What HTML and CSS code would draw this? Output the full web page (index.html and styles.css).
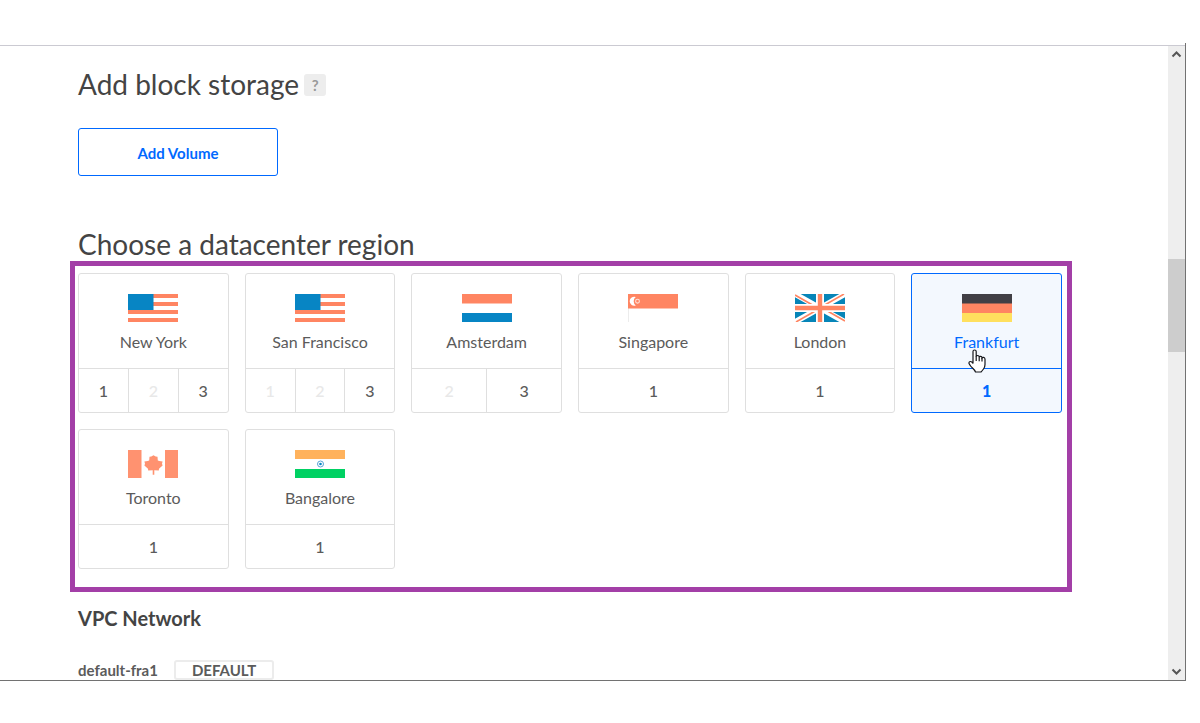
FILE: index.html
```html
<!DOCTYPE html>
<html lang="en">
<head>
<meta charset="utf-8">
<title>Create Droplet</title>
<link rel="stylesheet" href="styles.css">
</head>
<body>
<svg class="defs" aria-hidden="true">
  <symbol id="flag-us" viewBox="0 0 50 28">
    <rect width="50" height="28" fill="#fff"/>
    <path fill="#ff8562" d="M0 0h50v4H0zM0 8h50v4H0zM0 16h50v4H0zM0 24h50v4H0z"/>
    <rect width="25.500" height="16" fill="#0785c4"/>
  </symbol>
</svg>
<div class="frame">
  <div class="view">
    <main class="content">
      <h2 class="title">Add block storage <button class="help" type="button" aria-label="Help">?</button></h2>
      <button class="add-volume" type="button">Add Volume</button>
      <h2 class="title title-region">Choose a datacenter region</h2>
      <section class="highlight" aria-label="Datacenter regions">
        <article class="card">
          <div class="place"><svg class="flag"><use href="#flag-us"/></svg><h3 class="name">New York</h3></div>
          <div class="slots"><button class="slot" type="button">1</button><button class="slot" type="button" disabled>2</button><button class="slot" type="button">3</button></div>
        </article>
        <article class="card">
          <div class="place"><svg class="flag"><use href="#flag-us"/></svg><h3 class="name">San Francisco</h3></div>
          <div class="slots"><button class="slot" type="button" disabled>1</button><button class="slot" type="button" disabled>2</button><button class="slot" type="button">3</button></div>
        </article>
        <article class="card">
          <div class="place">
            <svg class="flag" viewBox="0 0 50 28"><rect width="50" height="9.5" fill="#ff8562"/><rect y="19" width="50" height="9" fill="#0785c4"/></svg>
            <h3 class="name">Amsterdam</h3>
          </div>
          <div class="slots"><button class="slot" type="button" disabled>2</button><button class="slot" type="button">3</button></div>
        </article>
        <article class="card">
          <div class="place">
            <svg class="flag" viewBox="0 0 50 28"><path d="M.5 14v14" stroke="#ececec"/><rect width="50" height="14.5" fill="#ff8562"/><path d="M7.800 3A4.500 4.500 0 1 0 7.800 11.400A5.200 5.200 0 0 1 7.800 3Z" fill="#fff"/><circle cx="9.500" cy="7.200" r="1.900" fill="none" stroke="#ffe0d6" stroke-width="1.100"/></svg>
            <h3 class="name">Singapore</h3>
          </div>
          <div class="slots"><button class="slot" type="button">1</button></div>
        </article>
        <article class="card">
          <div class="place">
            <svg class="flag" viewBox="0 0 50 28"><rect width="50" height="28" fill="#0785b8"/><path d="M0 0l50 28M50 0L0 28" stroke="#fff" stroke-width="5.5"/><path d="M0 1l21 12M50 27L29 15M49 0L28 12M1 28l21-12" stroke="#ff8562" stroke-width="1.6"/><path d="M25 0v28M0 14h50" stroke="#fff" stroke-width="8"/><path d="M25 0v28M0 14h50" stroke="#ff8562" stroke-width="4.4"/></svg>
            <h3 class="name">London</h3>
          </div>
          <div class="slots"><button class="slot" type="button">1</button></div>
        </article>
        <article class="card card-selected">
          <div class="place">
            <svg class="flag" viewBox="0 0 50 28"><rect width="50" height="10" fill="#413f45"/><rect y="9.5" width="50" height="10" fill="#ff8562"/><rect y="19" width="50" height="9" fill="#ffe05e"/></svg>
            <h3 class="name">Frankfurt</h3>
          </div>
          <div class="slots"><button class="slot" type="button" aria-pressed="true">1</button></div>
          <svg class="pointer" viewBox="0 0 18 24" aria-hidden="true"><path d="M5 14.5V2.5Q5 1 6.6 1T8.2 2.500V7.400Q8.400 6.500 9.700 6.500T11.200 8Q11.500 7.200 12.700 7.300T14 8.800Q14.400 8.200 15.600 8.400T17 10V15.500Q17 18 15.500 20T13 23H7.500Q6.800 21 4.500 19T1 14.500Q.8 12.500 2.400 12.500T5 14.500Z" fill="#fff" stroke="#15171c" stroke-width="1.200"/><path d="M8.200 7v5M11.200 8v4.200M14 9v3.500" stroke="#15171c" stroke-width="1.200"/></svg>
        </article>
        <article class="card">
          <div class="place">
            <svg class="flag" viewBox="0 0 50 28"><path d="M0 0h13.500v28H0zM37 0h13v28H37z" fill="#ff9270"/><path d="M25.500 5.200l2.200 1.300 1.800.3.300 3.700 1.500.5 3.300.4-.6 2.400.6 1.700-3.600 3.200-.2 1.800-4.500-.3v4.600h-1.600v-4.600l-4.500.3-.2-1.800-3.600-3.200.6-1.700-.6-2.400 3.300-.4 1.500-.5.300-3.700 1.800-.3z" fill="#ff9270"/></svg>
            <h3 class="name">Toronto</h3>
          </div>
          <div class="slots"><button class="slot" type="button">1</button></div>
        </article>
        <article class="card">
          <div class="place">
            <svg class="flag" viewBox="0 0 50 28"><rect width="50" height="9" fill="#ffb25c"/><rect y="19" width="50" height="9" fill="#00d163"/><circle cx="25.500" cy="14" r="3" fill="#fff" stroke="#5aa5d6"/><circle cx="25.500" cy="14" r="1.300" fill="#0785c4"/></svg>
            <h3 class="name">Bangalore</h3>
          </div>
          <div class="slots"><button class="slot" type="button">1</button></div>
        </article>
      </section>
      <h3 class="subtitle">VPC Network</h3>
      <div class="network"><span>default-fra1</span><span class="tag">DEFAULT</span></div>
    </main>
    <div class="scrollbar" aria-hidden="true">
      <svg class="arrow" viewBox="0 0 17 17"><path d="M4.500 10.500l4-4 4 4" fill="none" stroke="#555" stroke-width="2"/></svg>
      <div class="track"><div class="thumb"></div></div>
      <svg class="arrow" viewBox="0 0 17 17"><path d="M4.500 6.500l4 4 4-4" fill="none" stroke="#555" stroke-width="2"/></svg>
    </div>
  </div>
</div>
</body>
</html>
```
FILE: styles.css
```css
* { box-sizing: border-box; }

body {
  margin: 0;
  height: 100vh;
  padding: 43px 14px 42px 0;
  display: flex;
  background: #fff;
  color: #5b5b5b;
  font: 16px/24px Lato, "Liberation Sans", sans-serif;
}

button { font: inherit; color: inherit; background: none; cursor: pointer; }

.defs { position: absolute; width: 0; height: 0; }

.frame {
  flex: 1;
  display: flex;
  padding-top: 2px;
  border: solid #727272;
  border-width: 0 1px 1px 0;
}

.view {
  flex: 1;
  display: flex;
  overflow: hidden;
  border-top: 1px solid #cbcad2;
}

.content { flex: 1; min-width: 0; padding: 22px 106px 0 78px; }

.title {
  display: flex;
  align-items: center;
  gap: 5px;
  margin: 0;
  color: #444;
  font-size: 28px;
  line-height: 32px;
  font-weight: 400;
}

.title-region { margin-top: 52px; }

.help {
  width: 22px;
  height: 22px;
  margin-top: 2px;
  padding: 0;
  border: 0;
  border-radius: 3px;
  background: #ededed;
  color: #999;
  font-size: 15px;
  line-height: 22px;
  font-weight: 700;
}

.add-volume {
  display: block;
  width: 200px;
  height: 48px;
  margin-top: 28px;
  padding: 2px 0 0;
  border: 1px solid #0069ff;
  border-radius: 3px;
  color: #0069ff;
  font-size: 15px;
  font-weight: 700;
}

.highlight {
  display: grid;
  grid-template-columns: repeat(6, minmax(0, 1fr));
  gap: 16px;
  margin: 1px -10px 0 -8px;
  padding: 7px 5px 18px 3px;
  border: 5px solid #a33fa7;
}

.card {
  position: relative;
  border: 1px solid #dfdfdf;
  border-radius: 3px;
}

.place {
  display: flex;
  flex-direction: column;
  align-items: center;
  gap: 8px;
  padding: 20px 0 14px;
}

.flag { width: 50px; height: 28px; }

.name { margin: 0; font-size: 16px; font-weight: 400; }

.slots { display: flex; border-top: 1px solid #dfdfdf; }

.slot {
  flex: 1;
  height: 43px;
  padding: 0;
  border: 0;
  font-weight: 500;
}

.slot + .slot { border-left: 1px solid #dfdfdf; }
.slot:disabled { color: #e8e8e8; }

.card-selected { background: #f3f8fe; color: #0069ff; }
.card-selected,
.card-selected .slots { border-color: #0069ff; }
.card-selected .slot { font-weight: 900; }

.pointer {
  position: absolute;
  top: 75px;
  left: 56px;
  width: 18px;
  height: 24px;
}

.subtitle {
  margin: 14px 0 30px;
  color: #444;
  font-size: 20px;
  font-weight: 700;
}

.network {
  display: flex;
  gap: 16px;
  font-size: 15px;
  line-height: 20px;
  font-weight: 700;
}

.tag {
  padding: 0 16px;
  border: 2px solid #ececec;
  border-radius: 3px;
  line-height: 16px;
}

.scrollbar {
  display: flex;
  flex-direction: column;
  width: 17px;
  background: #eee;
}

.arrow { width: 17px; height: 17px; }
.track { flex: 1; padding-top: 196px; }
.thumb { height: 93px; background: #cdcdcd; }
```
